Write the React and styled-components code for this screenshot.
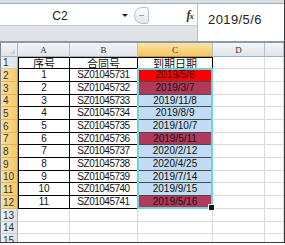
import React from 'react';
import styled, { createGlobalStyle } from 'styled-components';

const GlobalStyle = createGlobalStyle`
  html, body {
    margin: 0;
    padding: 0;
    background: #ffffff;
    overflow: hidden;
  }
`;

const ROW_HEIGHTS = [12, 13, 13, 12, 13, 13, 12, 13, 13, 12, 13, 13, 13, 12, 13];

const Window = styled.div`
  width: 284px;
  height: 242px;
  border-right: 1px solid #3a3a3a;
  border-bottom: 1px solid #3a3a3a;
  display: flex;
  flex-direction: column;
  overflow: hidden;
  font-family: 'Liberation Sans', Arial, sans-serif;
  background: #ffffff;
  & > * {
    flex-shrink: 0;
  }
`;

const Ribbon = styled.div`
  height: 3px;
  background: #d9dee5;
  border-bottom: 1px solid #a7b1bd;
`;

const FormulaBar = styled.div`
  display: flex;
  height: 37px;
  border-bottom: 2px solid #8d99a8;
`;

const LeftPane = styled.div`
  width: 197px;
  display: flex;
  flex-direction: column;
  border-right: 1px solid #b6bfca;
`;

const NameRow = styled.div`
  height: 22px;
  display: flex;
  align-items: center;
  padding-top: 2px;
  box-sizing: border-box;
  background: #ffffff;
  border-bottom: 1px solid #c5ccd5;
`;

const NameBox = styled.div`
  width: 120px;
  text-align: center;
  font-size: 12px;
  color: #222;
`;

const Caret = styled.div`
  width: 0;
  height: 0;
  border-left: 3px solid transparent;
  border-right: 3px solid transparent;
  border-top: 3px solid #222;
  margin-left: 2px;
`;

const Knob = styled.div`
  width: 13px;
  height: 15px;
  margin-left: 6px;
  border: 1px solid #b8bfc8;
  border-radius: 8px 3px 3px 8px;
  background: linear-gradient(#fdfdfd, #e3e6ea);
  display: flex;
  align-items: center;
  justify-content: center;
  &::after {
    content: '';
    width: 5px;
    height: 1px;
    background: #9aa3ad;
  }
`;

const FxLabel = styled.div`
  margin-left: auto;
  margin-right: 4px;
  font-family: 'Liberation Serif', 'Times New Roman', serif;
  font-style: italic;
  font-weight: bold;
  font-size: 12px;
  color: #333;
  letter-spacing: -1px;
  span {
    font-size: 9px;
  }
`;

const GreyStrip = styled.div`
  flex: 1;
  background: #dfe3e8;
`;

const FormulaInput = styled.div`
  flex: 1;
  background: #ffffff;
  padding: 8px 0 0 10px;
  font-size: 13px;
  letter-spacing: 0.4px;
  color: #222;
`;

const Sheet = styled.div`
  display: grid;
  grid-template-columns: 18px 52px 68px 75px 52px 1fr;
  grid-template-rows: 14px ${ROW_HEIGHTS.map((h) => `${h}px`).join(' ')};
  position: relative;
`;

const Corner = styled.div`
  background: linear-gradient(#f3f5f7, #dfe3e8);
  border-right: 1px solid #b0b8c2;
  border-bottom: 1px solid #9eb0c3;
  border-left: 1px solid #7d8791;
  position: relative;
  &::after {
    content: '';
    position: absolute;
    right: 2px;
    bottom: 2px;
    border-left: 5px solid transparent;
    border-bottom: 5px solid #c9ced4;
  }
`;

const ColHead = styled.div`
  background: ${(p) =>
    p.$active
      ? 'linear-gradient(#fbe3a6, #f3c65e)'
      : 'linear-gradient(#f4f6f8, #e0e4e9)'};
  border-right: 1px solid #b9c2cc;
  border-bottom: 1px solid ${(p) => (p.$active ? '#c9923a' : '#9eb0c3')};
  font-family: 'Liberation Serif', serif;
  font-size: 9px;
  color: #333;
  display: flex;
  align-items: center;
  justify-content: center;
`;

const RowHead = styled.div`
  background: ${(p) =>
    p.$active
      ? 'linear-gradient(90deg, #fbe0a0, #f4c967)'
      : 'linear-gradient(90deg, #eef1f4, #dfe3e8)'};
  border-left: 1px solid #7d8791;
  border-right: 1px solid ${(p) => (p.$active ? '#c9923a' : '#9eb0c3')};
  border-bottom: 1px solid ${(p) => (p.$active ? '#e3b45a' : '#c3ccd6')};
  font-size: 10px;
  color: #333;
  padding-left: 2px;
  display: flex;
  align-items: center;
`;

const Cell = styled.div`
  background: ${(p) => p.$fill || '#ffffff'};
  border-right: 1px solid ${(p) => p.$edge || '#dadada'};
  border-bottom: 1px solid ${(p) => p.$edge || '#dadada'};
  border-left: ${(p) => (p.$left ? `1px solid ${p.$edge}` : 'none')};
  border-top: ${(p) => (p.$top ? `1px solid ${p.$edge}` : 'none')};
  font-family: ${(p) =>
    p.$cjk
      ? "'Noto Sans CJK SC', sans-serif"
      : "'Liberation Sans', Arial, sans-serif"};
  font-size: ${(p) => (p.$cjk ? '11px' : '10px')};
  letter-spacing: ${(p) => (p.$tight ? '-0.5px' : '0')};
  color: #111;
  display: flex;
  align-items: center;
  justify-content: center;
  line-height: 1;
  white-space: nowrap;
`;

const Selection = styled.div`
  position: absolute;
  grid-column: 4 / 5;
  grid-row: 3 / 14;
  top: -1px;
  left: -1px;
  right: 0;
  bottom: 0;
  border: 2px solid #6fd3d6;
  pointer-events: none;
  &::after {
    content: '';
    position: absolute;
    right: -4px;
    bottom: -4px;
    width: 5px;
    height: 5px;
    background: #1a1a1a;
    border: 1px solid #ffffff;
  }
`;

const red = '#ff0000';
const wine = '#b2385c';
const blue = '#c1dcf4';

const rows = [
  ['1', 'SZ01045731', '2019/5/6', red],
  ['2', 'SZ01045732', '2019/3/7', wine],
  ['3', 'SZ01045733', '2019/11/8', blue],
  ['4', 'SZ01045734', '2019/8/9', blue],
  ['5', 'SZ01045735', '2019/10/7', blue],
  ['6', 'SZ01045736', '2019/5/11', wine],
  ['7', 'SZ01045737', '2020/2/12', blue],
  ['8', 'SZ01045738', '2020/4/25', blue],
  ['9', 'SZ01045739', '2019/7/14', blue],
  ['10', 'SZ01045740', '2019/9/15', blue],
  ['11', 'SZ01045741', '2019/5/16', wine],
];

export default function App() {
  return (
    <>
      <GlobalStyle />
      <Window>
        <Ribbon />
        <FormulaBar>
          <LeftPane>
            <NameRow>
              <NameBox>C2</NameBox>
              <Caret />
              <Knob />
              <FxLabel>
                f<span>x</span>
              </FxLabel>
            </NameRow>
            <GreyStrip />
          </LeftPane>
          <FormulaInput>2019/5/6</FormulaInput>
        </FormulaBar>
        <Sheet>
          <Corner />
          <ColHead>A</ColHead>
          <ColHead>B</ColHead>
          <ColHead $active>C</ColHead>
          <ColHead>D</ColHead>
          <ColHead />

          <RowHead>1</RowHead>
          <Cell $edge="#000" $left $top $cjk>序号</Cell>
          <Cell $edge="#000" $top $cjk>合同号</Cell>
          <Cell $edge="#000" $top $cjk>到期日期</Cell>
          <Cell />
          <Cell />

          {rows.map(([n, code, date, fill], i) => (
            <React.Fragment key={code}>
              <RowHead $active>{i + 2}</RowHead>
              <Cell $edge="#000" $left>{n}</Cell>
              <Cell $edge="#000" $tight>{code}</Cell>
              <Cell $edge="#4a4a4a" $fill={fill}>{date}</Cell>
              <Cell />
              <Cell />
            </React.Fragment>
          ))}

          {[13, 14, 15].map((r) => (
            <React.Fragment key={r}>
              <RowHead>{r}</RowHead>
              <Cell />
              <Cell />
              <Cell />
              <Cell />
              <Cell />
            </React.Fragment>
          ))}
          <Selection />
        </Sheet>
      </Window>
    </>
  );
}
